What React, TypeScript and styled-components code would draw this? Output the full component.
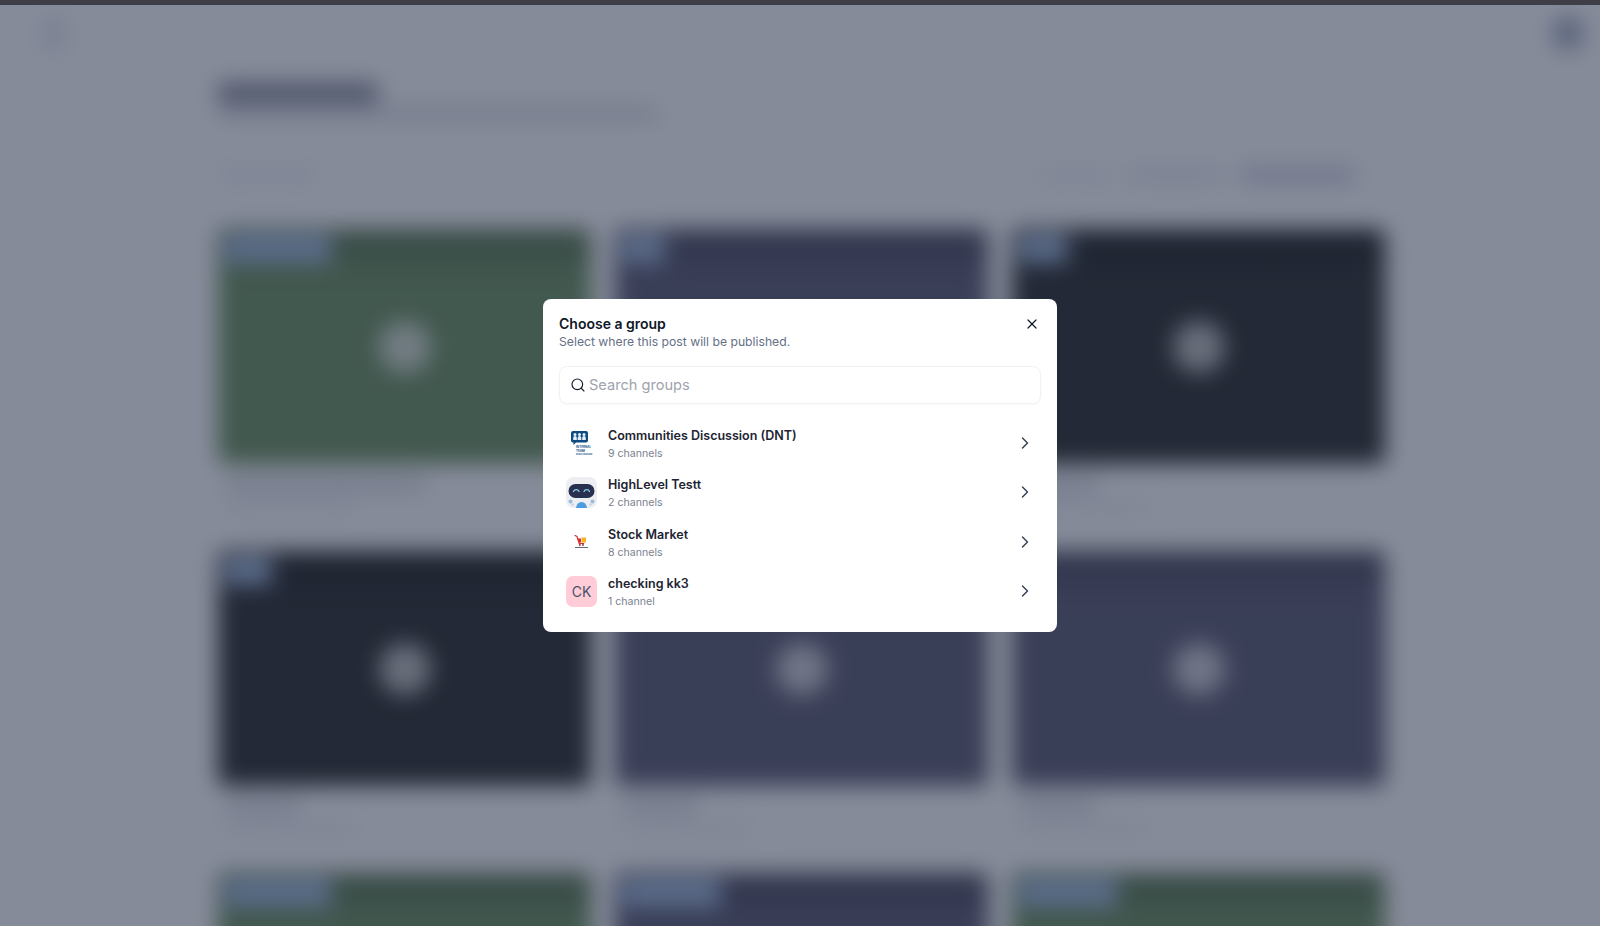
import React from 'react'
import styled, { createGlobalStyle } from 'styled-components'
import { ChevronRight, Search, X } from 'lucide-react'

const GlobalStyle = createGlobalStyle`
  html, body {
    margin: 0;
    height: 100%;
    background: #fff;
    font-family: Inter, 'Noto Sans', sans-serif;
    overflow: hidden;
  }
  * { box-sizing: border-box; }
`

const Page = styled.div`
  height: 926px;
  display: flex;
  flex-direction: column;
`

const TopBar = styled.div`
  height: 5px;
  flex: none;
  background: #3f3d45;
`

const Stage = styled.div`
  position: relative;
  flex: 1;
  overflow: hidden;
  background: #fff;
`

const BlurredContent = styled.div`
  filter: blur(11px);
`

const Nav = styled.div`
  height: 60px;
  padding: 10px 16px 0 42px;
  display: flex;
  justify-content: space-between;
`

const NavLogo = styled.div`
  width: 24px;
  height: 36px;
  border-radius: 4px;
  background: #e9ecf3;
`

const NavAvatar = styled.div`
  width: 32px;
  height: 36px;
  border-radius: 50%;
  background: #aab3c6;
`

const Main = styled.div`
  padding: 18px 215px 0 218px;
`

const Heading = styled.div`
  width: 160px;
  height: 20px;
  background: #8a8f9b;
  border-radius: 3px;
`

const SubHeading = styled.div`
  width: 440px;
  height: 9px;
  margin-top: 6px;
  background: #cdd0d8;
  border-radius: 3px;
`

const Toolbar = styled.div`
  height: 40px;
  margin-top: 37px;
  display: flex;
  align-items: center;
  gap: 15px;
  padding-right: 30px;
`

const ToolbarChip = styled.div<{ $width: number; $shade: string; $pushed?: boolean }>`
  width: ${(p) => p.$width}px;
  height: 18px;
  border-radius: 4px;
  background: ${(p) => p.$shade};
  margin-left: ${(p) => (p.$pushed ? 'auto' : '0')};
`

const CardGrid = styled.div`
  margin-top: 34px;
  display: grid;
  grid-template-columns: repeat(3, 373px);
  column-gap: 24px;
  row-gap: 0;
`

const Card = styled.div`
  height: 322px;
`

const Thumb = styled.div<{ $tone: string }>`
  position: relative;
  height: 235px;
  border-radius: 8px;
  background: linear-gradient(180deg, rgba(0, 0, 0, 0.22) 0, rgba(0, 0, 0, 0) 22%), ${(p) => p.$tone};
  display: flex;
  align-items: center;
  justify-content: center;
`

const ThumbBadge = styled.div<{ $width: number }>`
  position: absolute;
  top: 6px;
  left: 6px;
  width: ${(p) => p.$width}px;
  height: 28px;
  border-radius: 4px;
  background: #a9c2e2;
`

const PlayCircle = styled.div`
  width: 52px;
  height: 52px;
  border-radius: 50%;
  background: #fff;
  opacity: 0.7;
`

const CardTitle = styled.div<{ $width: number }>`
  width: ${(p) => p.$width}px;
  height: 10px;
  margin: 15px 0 0 8px;
  background: #cdd0d8;
  border-radius: 3px;
`

const CardMeta = styled.div`
  width: 130px;
  height: 8px;
  margin: 14px 0 0 8px;
  background: #e8eaf1;
  border-radius: 3px;
`

const Overlay = styled.div`
  position: absolute;
  inset: 0;
  background: rgba(13, 24, 52, 0.5);
  display: flex;
  align-items: center;
  justify-content: center;
`

const Modal = styled.div`
  width: 514px;
  height: 333px;
  padding: 16px 16px 16px;
  background: #fff;
  border-radius: 8px;
  display: flex;
  flex-direction: column;
`

const ModalHeader = styled.div`
  display: flex;
  justify-content: space-between;
  align-items: flex-start;
`

const ModalTitle = styled.h2`
  margin: 0;
  font-size: 14px;
  line-height: 18px;
  font-weight: 600;
  color: #101828;
`

const ModalSubtitle = styled.p`
  margin: 0;
  font-size: 12.2px;
  line-height: 18px;
  color: #667085;
`

const CloseButton = styled.button`
  width: 20px;
  height: 20px;
  margin: -1px -1px 0 0;
  padding: 0;
  border: none;
  background: none;
  color: #101828;
  display: flex;
  align-items: center;
  justify-content: center;
`

const SearchBox = styled.label`
  height: 38px;
  margin-top: 15px;
  padding: 0 10px;
  display: flex;
  align-items: center;
  gap: 3px;
  border: 1px solid #f0f1f4;
  border-radius: 8px;
  color: #101828;
  box-shadow: 0 1px 2px rgba(16, 24, 40, 0.03);
`

const SearchInput = styled.input`
  flex: 1;
  border: none;
  outline: none;
  padding: 0;
  font-family: inherit;
  font-size: 14.6px;
  color: #101828;

  &::placeholder {
    color: #9ea3ae;
  }
`

const GroupList = styled.div`
  margin-top: 14px;
  display: flex;
  flex-direction: column;
`

const GroupRow = styled.div`
  height: 49.5px;
  padding: 0 6px 0 7px;
  display: flex;
  align-items: center;
  gap: 11px;
`

const Avatar = styled.div`
  width: 31px;
  height: 31px;
  flex: none;
  border-radius: 7px;
  overflow: hidden;
  display: flex;
  align-items: center;
  justify-content: center;
`

const InitialsAvatar = styled(Avatar)`
  background: #ffccd8;
  color: #475467;
  font-size: 14px;
`

const GroupText = styled.div`
  flex: 1;
  min-width: 0;
  padding-top: 3px;
`

const GroupName = styled.div`
  font-size: 12.5px;
  line-height: 18px;
  font-weight: 600;
  color: #1d2433;
`

const GroupCount = styled.div`
  font-size: 10.6px;
  line-height: 16px;
  margin-top: 1px;
  color: #7a8190;
`

const Chevron = styled(ChevronRight)`
  color: #344054;
  flex: none;
`

const TeamLogo = () => (
  <svg width='31' height='31' viewBox='0 0 31 31'>
    <path d='M7 4h13a2 2 0 0 1 2 2v7.500a2 2 0 0 1-2 2H10l-2.500 2.500V15.500H7a2 2 0 0 1-2-2V6a2 2 0 0 1 2-2z' fill='#0f4c81' />
    <circle cx='9' cy='7.500' r='1.500' fill='#e6f0f8' />
    <circle cx='13.500' cy='7.500' r='1.500' fill='#e6f0f8' />
    <circle cx='18' cy='7.500' r='1.500' fill='#e6f0f8' />
    <path d='M7.200 13v-2.300a1.800 1.800 0 0 1 3.600 0V13zM11.700 13v-2.300a1.800 1.800 0 0 1 3.600 0V13zM16.200 13v-2.300a1.800 1.800 0 0 1 3.600 0V13z' fill='#e6f0f8' />
    <text x='10' y='21' fontSize='3' fontWeight='700' fill='#1d5c8f' fontFamily='Inter, sans-serif'>INTERNAL</text>
    <text x='10' y='24.500' fontSize='3' fontWeight='700' fill='#1d5c8f' fontFamily='Inter, sans-serif'>TEAM</text>
    <text x='10' y='28' fontSize='2.600' fontWeight='700' fill='#1d5c8f' fontFamily='Inter, sans-serif'>DISCUSSION</text>
  </svg>
)

const BotLogo = () => (
  <svg width='31' height='31' viewBox='0 0 31 31'>
    <rect width='31' height='31' rx='7' fill='#eceef1' />
    <rect x='2.500' y='7' width='26' height='14' rx='7' fill='#27304f' />
    <path d='M7.500 14.500a3 3 0 0 1 5.500 0M18 14.500a3 3 0 0 1 5.500 0' fill='none' stroke='#8fd0f2' strokeWidth='1.300' strokeLinecap='round' />
    <path d='M10 31c.5-4 2.500-6 5.500-6s5 2 5.500 6z' fill='#4f9be0' />
    <circle cx='4.500' cy='24.500' r='2' fill='#9dbbd8' />
    <circle cx='26.500' cy='24.500' r='2' fill='#9dbbd8' />
    <circle cx='6.500' cy='27.500' r='1.200' fill='#c3d4e4' />
    <circle cx='24.500' cy='27.500' r='1.200' fill='#c3d4e4' />
  </svg>
)

const CartLogo = () => (
  <svg width='31' height='31' viewBox='0 0 31 31'>
    <path d='M9 9.500l2 1 2.200 7h4.500' fill='none' stroke='#d62c2c' strokeWidth='1.200' strokeLinecap='round' />
    <path d='M11.500 12.500h3.500v4h-2.300z' fill='#d62c2c' />
    <rect x='15.500' y='11.500' width='4.500' height='5' fill='#f0b429' />
    <circle cx='13.800' cy='19' r='0.900' fill='#a01f1f' />
    <circle cx='17' cy='19' r='0.900' fill='#a01f1f' />
    <rect x='9' y='21' width='13' height='0.900' fill='#55586a' />
  </svg>
)

const thumbTones = {
  green: '#779a6a',
  indigo: '#67667c',
  slate: '#393a38'
}

const cards = [
  { tone: thumbTones.green, badge: 108, title: 200 },
  { tone: thumbTones.indigo, badge: 44, title: 230 },
  { tone: thumbTones.slate, badge: 50, title: 80 },
  { tone: thumbTones.slate, badge: 48, title: 75 },
  { tone: thumbTones.indigo, badge: 0, title: 75 },
  { tone: thumbTones.indigo, badge: 0, title: 75 },
  { tone: thumbTones.green, badge: 108, title: 200 },
  { tone: thumbTones.indigo, badge: 100, title: 200 },
  { tone: thumbTones.green, badge: 100, title: 200 }
]

const groups = [
  { name: 'Communities Discussion (DNT)', count: '9 channels', logo: <Avatar><TeamLogo /></Avatar> },
  { name: 'HighLevel Testt', count: '2 channels', logo: <Avatar><BotLogo /></Avatar> },
  { name: 'Stock Market', count: '8 channels', logo: <Avatar><CartLogo /></Avatar> },
  { name: 'checking kk3', count: '1 channel', logo: <InitialsAvatar>CK</InitialsAvatar> }
]

const App = () => (
  <Page>
    <GlobalStyle />
    <TopBar />
    <Stage>
      <BlurredContent>
        <Nav>
          <NavLogo />
          <NavAvatar />
        </Nav>
        <Main>
          <Heading />
          <SubHeading />
          <Toolbar>
            <ToolbarChip $width={100} $shade='#f1f3f8' />
            <ToolbarChip $width={70} $shade='#f1f3f8' $pushed />
            <ToolbarChip $width={100} $shade='#eceef4' />
            <ToolbarChip $width={115} $shade='#d5d9e4' />
          </Toolbar>
          <CardGrid>
            {cards.map((card, idx) => (
              <Card key={idx.toString()}>
                <Thumb $tone={card.tone}>
                  {card.badge > 0 && <ThumbBadge $width={card.badge} />}
                  <PlayCircle />
                </Thumb>
                <CardTitle $width={card.title} />
                <CardMeta />
              </Card>
            ))}
          </CardGrid>
        </Main>
      </BlurredContent>
      <Overlay>
        <Modal>
          <ModalHeader>
            <div>
              <ModalTitle>Choose a group</ModalTitle>
              <ModalSubtitle>Select where this post will be published.</ModalSubtitle>
            </div>
            <CloseButton aria-label='Close'>
              <X size={16} strokeWidth={1.8} />
            </CloseButton>
          </ModalHeader>
          <SearchBox>
            <Search size={16} strokeWidth={1.7} />
            <SearchInput placeholder='Search groups' />
          </SearchBox>
          <GroupList>
            {groups.map((group) => (
              <GroupRow key={group.name}>
                {group.logo}
                <GroupText>
                  <GroupName>{group.name}</GroupName>
                  <GroupCount>{group.count}</GroupCount>
                </GroupText>
                <Chevron size={20} strokeWidth={1.7} />
              </GroupRow>
            ))}
          </GroupList>
        </Modal>
      </Overlay>
    </Stage>
  </Page>
)

export default App
